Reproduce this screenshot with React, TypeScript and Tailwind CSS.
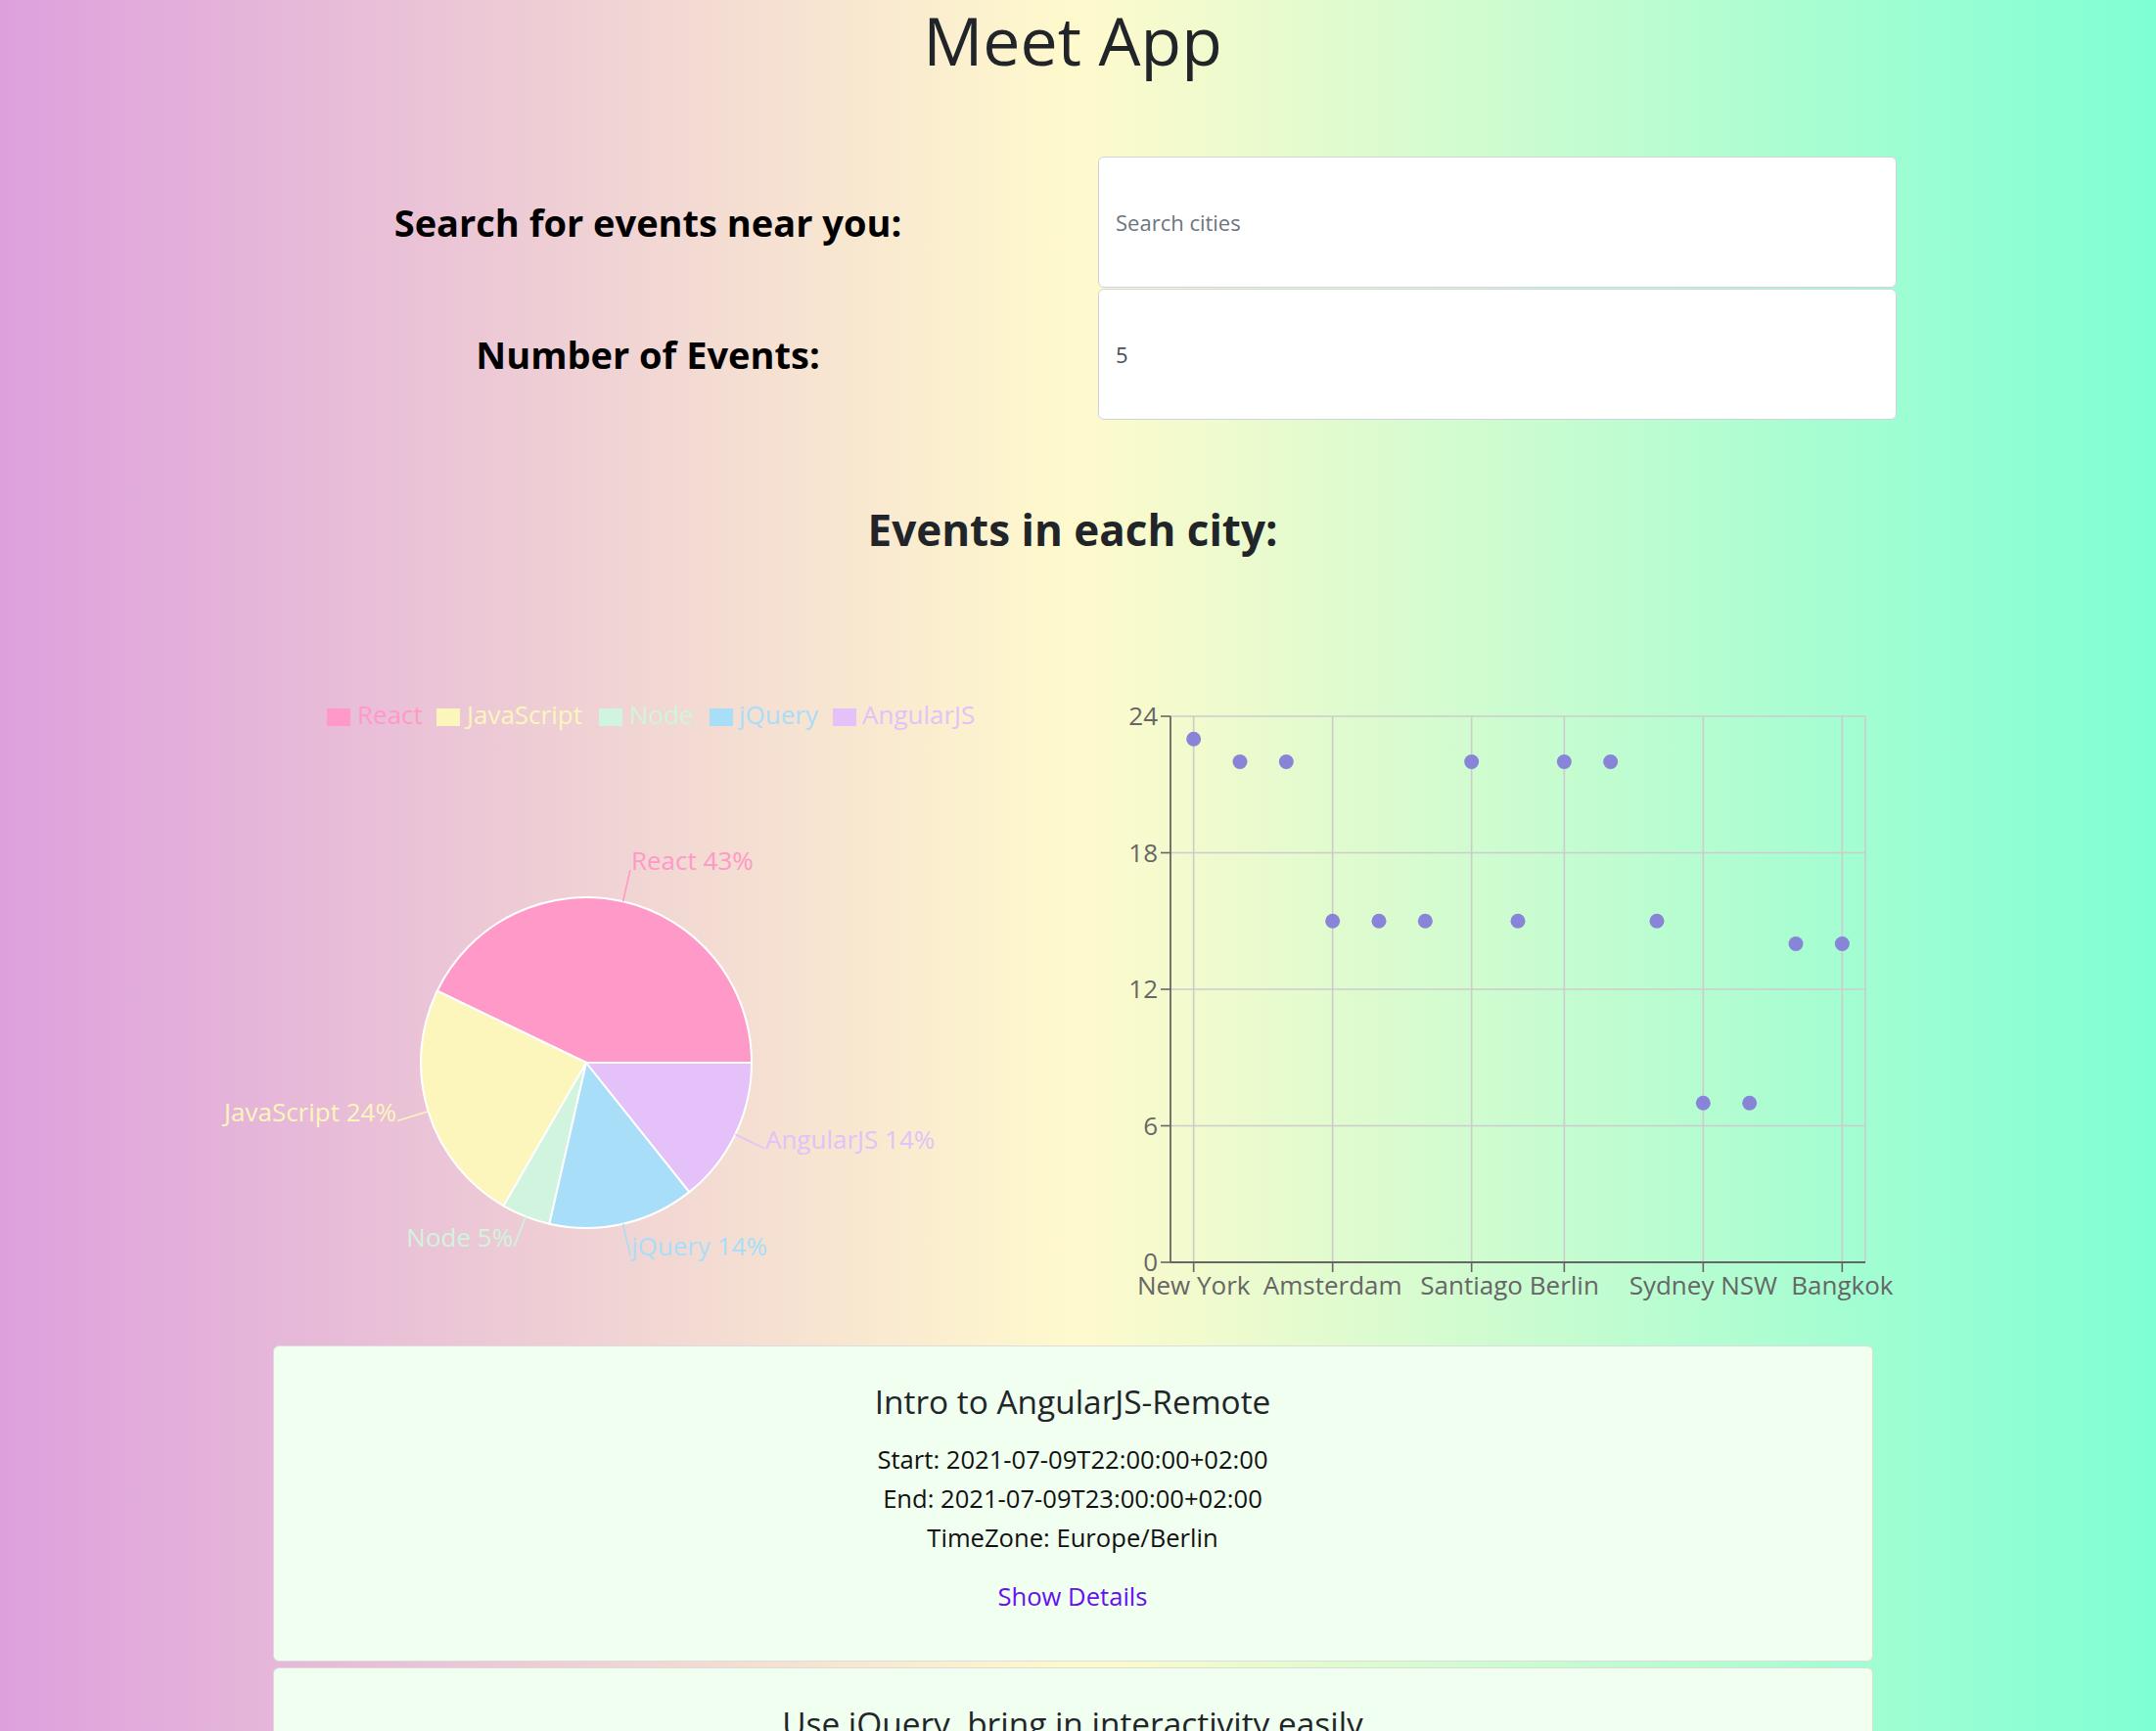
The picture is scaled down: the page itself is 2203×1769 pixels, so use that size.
import React from 'react';

const GENRES = [
  { name: 'React', value: 9, color: '#ff99c8', sx: 334, tx: 365 },
  { name: 'JavaScript', value: 5, color: '#fcf6bd', sx: 446, tx: 477 },
  { name: 'Node', value: 1, color: '#d0f4de', sx: 612, tx: 643 },
  { name: 'jQuery', value: 3, color: '#a9def9', sx: 725, tx: 755 },
  { name: 'AngularJS', value: 3, color: '#e4c1f9', sx: 851, tx: 881 },
];

const CITIES = [
  { city: 'New York', count: 23 },
  { city: 'Boston', count: 22 },
  { city: 'Chicago', count: 22 },
  { city: 'Amsterdam', count: 15 },
  { city: 'Paris', count: 15 },
  { city: 'Rome', count: 15 },
  { city: 'Santiago', count: 22 },
  { city: 'Lima', count: 15 },
  { city: 'Berlin', count: 22 },
  { city: 'Munich', count: 22 },
  { city: 'Tokyo', count: 15 },
  { city: 'Sydney NSW', count: 7 },
  { city: 'Melbourne', count: 7 },
  { city: 'Hanoi', count: 14 },
  { city: 'Bangkok', count: 14 },
];
const SHOWN_TICKS = [0, 3, 6, 8, 11, 14];

const EVENTS = [
  {
    summary: 'Intro to AngularJS-Remote',
    start: '2021-07-09T22:00:00+02:00',
    end: '2021-07-09T23:00:00+02:00',
    timeZone: 'Europe/Berlin',
  },
  {
    summary: 'Use jQuery, bring in interactivity easily',
    start: '2021-07-10T20:00:00+02:00',
    end: '2021-07-10T21:00:00+02:00',
    timeZone: 'Europe/Berlin',
  },
];

function GenreChart() {
  const cx = 599, cy = 1086, r = 169, off = 33;
  const total = GENRES.reduce((s, g) => s + g.value, 0);
  const pt = (a: number, rad: number) => [
    cx + rad * Math.cos((a * Math.PI) / 180),
    cy - rad * Math.sin((a * Math.PI) / 180),
  ];
  let acc = 0;
  const slices = GENRES.map(g => {
    const start = acc;
    const end = acc + (g.value / total) * 360;
    acc = end;
    return { ...g, start, end };
  });

  return (
    <svg width={1096} height={760} viewBox="0 600 1096 760" className="overflow-visible">
      {/* legend */}
      {GENRES.map(g => (
        <g key={g.name}>
          <rect x={g.sx} y={724} width={24} height={18} fill={g.color} />
          <text x={g.tx} y={740} fontSize={26} fill={g.color}>{g.name}</text>
        </g>
      ))}

      {/* slices */}
      {slices.map(s => {
        const [x1, y1] = pt(s.start, r);
        const [x2, y2] = pt(s.end, r);
        const large = s.end - s.start > 180 ? 1 : 0;
        return (
          <path
            key={s.name}
            d={`M${cx},${cy} L${x1},${y1} A${r},${r} 0 ${large} 0 ${x2},${y2} Z`}
            fill={s.color}
            stroke="#fff"
            strokeWidth={2}
          />
        );
      })}

      {/* labels */}
      {slices.map(s => {
        const mid = (s.start + s.end) / 2;
        const [ax, ay] = pt(mid, r);
        const [bx, by] = pt(mid, r + off);
        const right = Math.cos((mid * Math.PI) / 180) >= 0;
        const pct = Math.round((s.value / total) * 100);
        return (
          <g key={s.name}>
            <path d={`M${ax},${ay} L${bx},${by}`} stroke={s.color} strokeWidth={1.6} fill="none" />
            <text x={right ? bx + 1 : bx - 1} y={by} fontSize={26} fill={s.color} textAnchor={right ? 'start' : 'end'}>
              {s.name} {pct}%
            </text>
          </g>
        );
      })}
    </svg>
  );
}

function CityChart() {
  const left = 1196, right = 1906, top = 732, bottom = 1290;
  const band = (right - left) / CITIES.length;
  const x = (i: number) => left + band * (i + 0.5);
  const y = (v: number) => bottom - (v / 24) * (bottom - top);

  return (
    <svg width={1096} height={760} viewBox="1096 600 1096 760" className="overflow-visible">
      {/* grid */}
      {[6, 12, 18, 24].map(v => (
        <line key={v} x1={left} x2={right} y1={y(v)} y2={y(v)} stroke="#ccc" strokeWidth={1.6} />
      ))}
      {SHOWN_TICKS.map(i => (
        <line key={i} x1={x(i)} x2={x(i)} y1={top} y2={bottom} stroke="#ccc" strokeWidth={1.6} />
      ))}
      <line x1={right} x2={right} y1={top} y2={bottom} stroke="#ccc" strokeWidth={1.6} />

      {/* y axis */}
      <line x1={left} x2={left} y1={top} y2={bottom} stroke="#666" strokeWidth={1.8} />
      {[0, 6, 12, 18, 24].map(v => (
        <g key={v}>
          <line x1={left - 10} x2={left} y1={y(v)} y2={y(v)} stroke="#666" strokeWidth={1.6} />
          <text x={left - 13} y={y(v)} dy="0.36em" fontSize={26} fill="#666" textAnchor="end">{v}</text>
        </g>
      ))}

      {/* x axis */}
      <line x1={left} x2={right} y1={bottom} y2={bottom} stroke="#666" strokeWidth={1.8} />
      {SHOWN_TICKS.map(i => (
        <g key={i}>
          <line x1={x(i)} x2={x(i)} y1={bottom} y2={bottom + 10} stroke="#666" strokeWidth={1.6} />
          <text x={x(i)} y={1323} fontSize={26} fill="#666" textAnchor="middle">{CITIES[i].city}</text>
        </g>
      ))}

      {/* points */}
      {CITIES.map((c, i) => (
        <circle key={c.city} cx={x(i)} cy={y(c.count)} r={7.5} fill="#8884d8" />
      ))}
    </svg>
  );
}

function EventCard({ event }: { event: typeof EVENTS[0] }) {
  return (
    <div className="mx-auto w-[1635px] rounded-[6px] border border-[#dcdcdc] bg-[#f0fff0] pt-[37px] pb-[45px] text-center">
      <h2 className="text-[33.4px] leading-[38px] text-[#212529]">{event.summary}</h2>
      <div className="mt-[21px] text-[25.6px] leading-[40px] text-[#111]">
        <div>Start: {event.start}</div>
        <div>End: {event.end}</div>
        <div>TimeZone: {event.timeZone}</div>
      </div>
      <div className="mt-[20px]">
        <button className="text-[25.6px] leading-[40px] text-[#6610f2]">Show Details</button>
      </div>
    </div>
  );
}

export default function App() {
  return (
    <div className="min-h-screen bg-[linear-gradient(to_right,#dda0dd,#fffacd,#7fffd4)] font-['Open_Sans',sans-serif] text-[#212529]">
      <div className="w-[2192px]">
        <h1 className="pt-[1px] text-center text-[68px] leading-[79px] font-medium">Meet App</h1>

        {/* Search + number of events */}
        <div className="mx-auto mt-[80px] grid w-[1684px] grid-cols-2 gap-x-[52px] gap-y-[1px]">
          <label className="flex items-center justify-center text-[38px] font-bold text-black">Search for events near you:</label>
          <input
            placeholder="Search cities"
            className="h-[134px] w-full rounded-[6px] border border-[#ced4da] bg-white pl-[17px] text-[22px] text-[#495057] outline-none placeholder:text-[#6c757d]"
          />
          <label className="flex items-center justify-center text-[38px] font-bold text-black">Number of Events:</label>
          <input
            type="text"
            defaultValue="5"
            className="h-[134px] w-full rounded-[6px] border border-[#ced4da] bg-white pl-[17px] text-[22px] text-[#495057] outline-none"
          />
        </div>

        <h2 className="mt-[86px] text-center text-[44px] leading-[53px] font-bold">Events in each city:</h2>

        {/* Charts */}
        <div className="mt-[32px] flex">
          <GenreChart />
          <CityChart />
        </div>

        {/* Event list */}
        <div className="mt-[15px] flex flex-col gap-[6px] pb-10">
          {EVENTS.map(e => (
            <EventCard key={e.summary} event={e} />
          ))}
        </div>
      </div>
    </div>
  );
}
